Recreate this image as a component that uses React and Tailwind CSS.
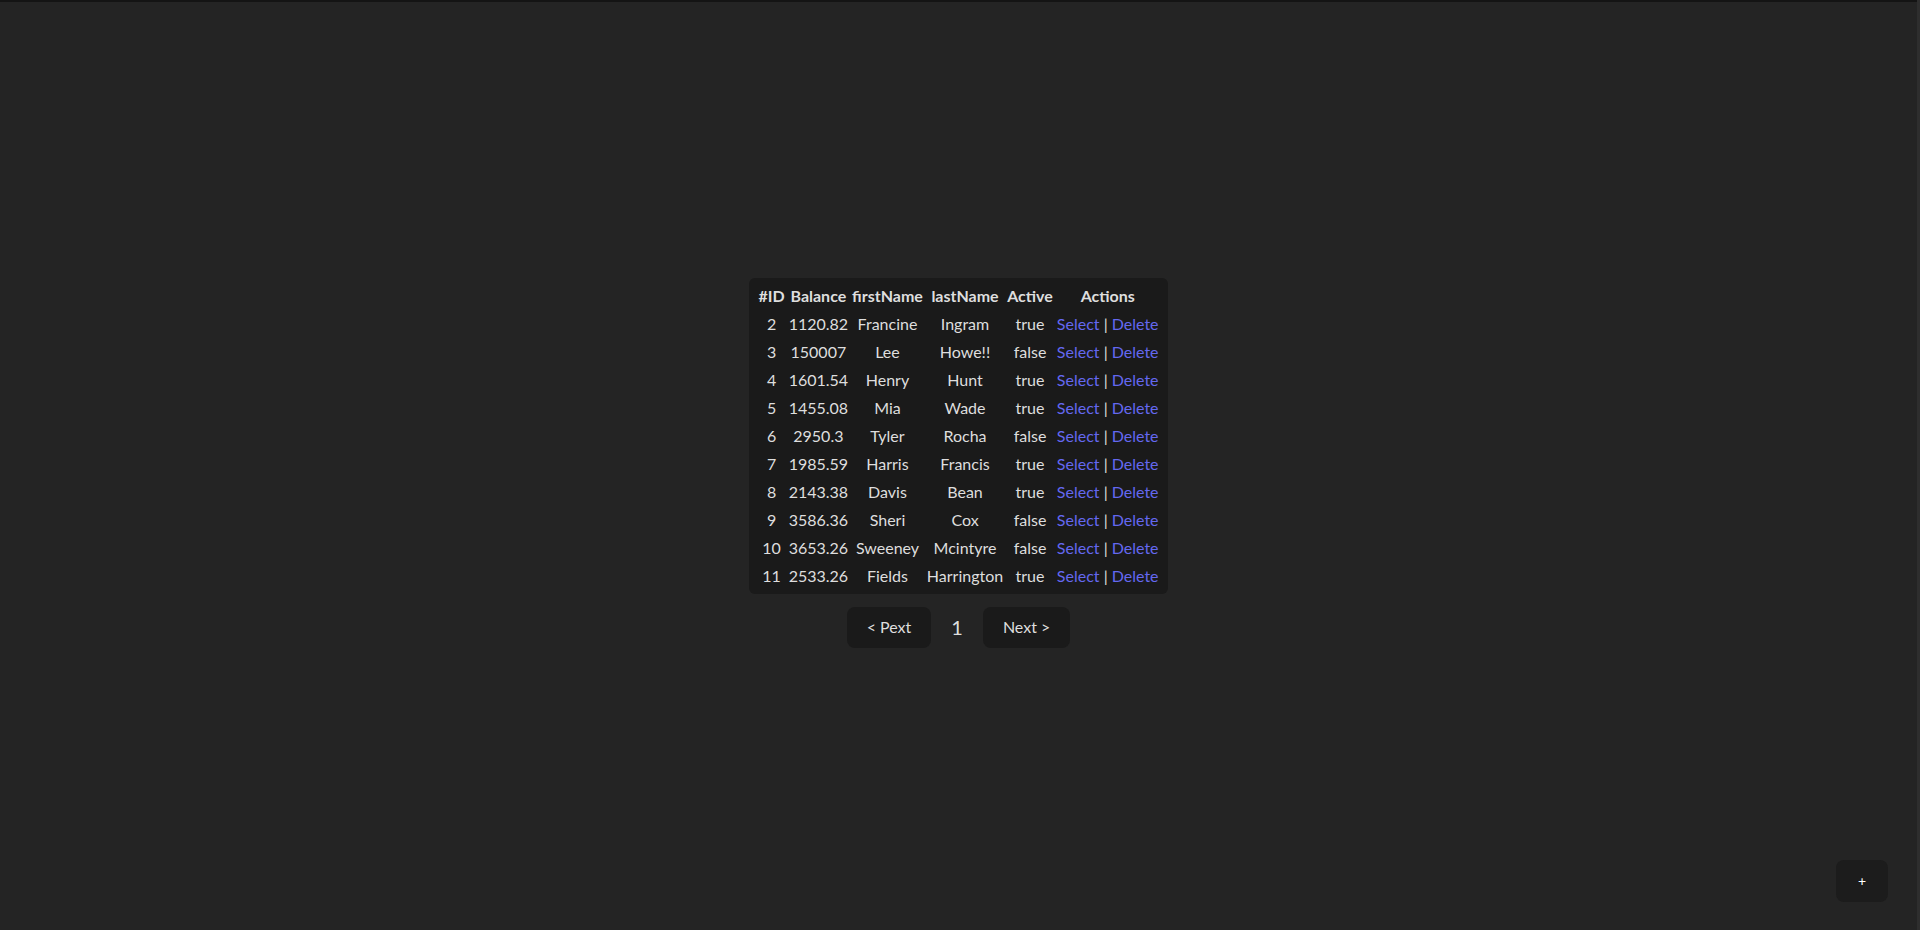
import React, { useState } from 'react';

const initialUsers = [
    { id: 2, balance: 1120.82, firstName: 'Francine', lastName: 'Ingram', active: true },
    { id: 3, balance: 150007, firstName: 'Lee', lastName: 'Howe!!', active: false },
    { id: 4, balance: 1601.54, firstName: 'Henry', lastName: 'Hunt', active: true },
    { id: 5, balance: 1455.08, firstName: 'Mia', lastName: 'Wade', active: true },
    { id: 6, balance: 2950.3, firstName: 'Tyler', lastName: 'Rocha', active: false },
    { id: 7, balance: 1985.59, firstName: 'Harris', lastName: 'Francis', active: true },
    { id: 8, balance: 2143.38, firstName: 'Davis', lastName: 'Bean', active: true },
    { id: 9, balance: 3586.36, firstName: 'Sheri', lastName: 'Cox', active: false },
    { id: 10, balance: 3653.26, firstName: 'Sweeney', lastName: 'Mcintyre', active: false },
    { id: 11, balance: 2533.26, firstName: 'Fields', lastName: 'Harrington', active: true },
];

const App = () => {
    const [users, setUsers] = useState(initialUsers);
    const [page] = useState(1);
    const [selected, setSelected] = useState(null);

    const handleDelete = (id) => {
        setUsers(users.filter(u => u.id !== id));
    };

    return (
        <div className="flex h-[930px] w-full overflow-hidden bg-[#242424] text-[#dedede] font-['Lato','Noto_Sans',sans-serif] text-base leading-6">
            <div className="flex flex-1 flex-col">
                <div className="h-[2px] bg-[#141414]"></div>
                {/* table + pager, centered in the viewport */}
                <main className="flex flex-1 flex-col items-center justify-center pb-[7px]">
                    <div className="rounded-[6px] bg-[#1a1a1a] px-[6px] py-[3px]">
                        <table className="border-separate border-spacing-[2px] text-center">
                            <thead>
                                <tr>
                                    <th className="px-px py-px font-bold">#ID</th>
                                    <th className="px-px py-px font-bold">Balance</th>
                                    <th className="px-px py-px font-bold">firstName</th>
                                    <th className="px-px py-px font-bold">lastName</th>
                                    <th className="px-px py-px font-bold">Active</th>
                                    <th className="px-px py-px font-bold">Actions</th>
                                </tr>
                            </thead>
                            <tbody>
                                {users.map(user => (
                                    <tr key={user.id} className={selected === user.id ? 'text-white' : ''}>
                                        <td className="px-px py-px">{user.id}</td>
                                        <td className="px-px py-px">{user.balance}</td>
                                        <td className="px-px py-px">{user.firstName}</td>
                                        <td className="px-px py-px">{user.lastName}</td>
                                        <td className="px-px py-px">{String(user.active)}</td>
                                        <td className="px-px py-px whitespace-nowrap">
                                            <a href="#" onClick={(e) => { e.preventDefault(); setSelected(user.id); }} className="text-[#6468f0]">Select</a>
                                            <span> | </span>
                                            <a href="#" onClick={(e) => { e.preventDefault(); handleDelete(user.id); }} className="text-[#6468f0]">Delete</a>
                                        </td>
                                    </tr>
                                ))}
                            </tbody>
                        </table>
                    </div>

                    <div className="mt-[13px] flex items-center gap-5">
                        <button className="h-[41px] rounded-lg bg-[#1a1a1a] px-5 text-base">&lt; Pext</button>
                        <span className="text-xl">{page}</span>
                        <button className="h-[41px] rounded-lg bg-[#1a1a1a] px-5 text-base">Next &gt;</button>
                    </div>
                </main>
            </div>
            <div className="w-[3px] bg-[#2e2e2e]"></div>

            <button className="fixed bottom-[28px] right-[32px] flex h-[42px] w-[52px] items-center justify-center rounded-lg bg-[#1c1c1c] text-sm text-white">+</button>
        </div>
    );
};

export default App;
